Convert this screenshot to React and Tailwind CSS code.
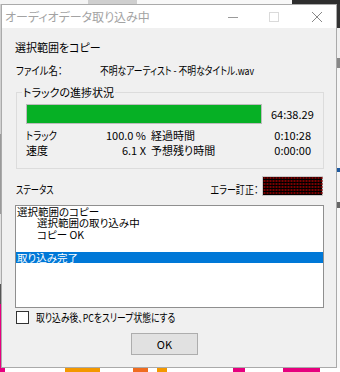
import React from "react";

function Led() {
  const dots = [];
  for (let r = 0; r < 6; r++) {
    for (let c = 0; c < 20; c++) {
      dots.push(<rect key={r + "-" + c} x={1.5 + c * 3} y={1 + r * 3} width="2" height="2" fill="#7a0000" />);
    }
  }
  return (
    <svg width="61" height="20" viewBox="0 0 61 20" className="block">
      <rect x="0" y="0" width="61" height="20" fill="#c8c8c8" />
      <rect x="1" y="1" width="59" height="18" fill="#000" />
      {dots}
    </svg>
  );
}

function Window() {
  return (
    <div className="w-[336px] h-[364px] border border-[#aaaaaa] flex flex-col shrink-0">
      <div className="h-[23px] bg-white flex items-center shrink-0">
        <span className="pl-[3px] text-[12px] leading-[14px] text-[#a3a3a3]">オーディオデータ取り込み中</span>
        <svg width="10" height="10" viewBox="0 0 10 10" className="ml-auto block">
          <line x1="0" y1="5.5" x2="10" y2="5.5" stroke="#9a9a9a" strokeWidth="1" />
        </svg>
        <svg width="10" height="10" viewBox="0 0 10 10" className="ml-[31px] block">
          <rect x="0.5" y="0.5" width="9" height="9" fill="none" stroke="#dadada" strokeWidth="1" />
        </svg>
        <svg width="10" height="10" viewBox="0 0 10 10" className="ml-[33px] mr-[14px] block">
          <path d="M0 0 L10 10 M10 0 L0 10" stroke="#888" strokeWidth="1" />
        </svg>
      </div>
      <div className="flex-1 bg-[#f0f0f0] flex flex-col pl-[14px]">
        <div className="mt-[12px] h-[14px] leading-[14px] -ml-px">選択範囲をコピー</div>
        <div className="mt-[9px] h-[14px] leading-[14px] flex">
          <span className="w-[84px]">
            <span className="inline-block origin-left scale-x-[0.85]">ファイル名：</span>
          </span>
          <span className="inline-block origin-left scale-x-[0.8] whitespace-nowrap">不明なアーティスト - 不明なタイトル.wav</span>
        </div>
        <fieldset className="mt-[8px] w-[307px] border border-[#dcdcdc]">
          <legend className="ml-[5px] px-[1px] leading-[14px]">トラックの進捗状況</legend>
          <div className="px-[9px] pb-[10px]">
            <div className="mt-[5px] flex items-center">
              <div className="w-[236px] h-[20px] border border-[#bcbcbc] bg-[#06b025]" />
              <span className="ml-[9px] leading-[14px]">64:38.29</span>
            </div>
            <div className="mt-[4px] h-[15px] leading-[15px] flex">
              <div className="w-[120px] flex justify-between">
                <span className="inline-block origin-left scale-x-[0.85]">トラック</span>
                <span>100.0 %</span>
              </div>
              <div className="ml-[5px] w-[160px] flex justify-between">
                <span>経過時間</span>
                <span>0:10:28</span>
              </div>
            </div>
            <div className="h-[15px] leading-[15px] flex">
              <div className="w-[120px] flex justify-between">
                <span>速度</span>
                <span>6.1 X</span>
              </div>
              <div className="ml-[5px] w-[160px] flex justify-between">
                <span>予想残り時間</span>
                <span>0:00:00</span>
              </div>
            </div>
          </div>
        </fieldset>
        <div className="mt-[7px] h-[20px] w-[307px] flex items-end">
          <span className="inline-block origin-left scale-x-[0.75] leading-[14px]">ステータス</span>
          <span className="ml-auto mr-[4px] inline-block origin-right scale-x-[0.82] leading-[14px]">エラー訂正：</span>
          <div className="self-start">
            <Led />
          </div>
        </div>
        <div className="mt-[9px] -ml-px w-[309px] h-[103px] border border-[#8f8f8f] bg-white text-[10.5px] leading-[11.4px]">
          <div className="pl-[1px]">選択範囲のコピー</div>
          <div className="pl-[21px]">選択範囲の取り込み中</div>
          <div className="pl-[21px]">コピー OK</div>
          <div className="h-[11.4px]"></div>
          <div className="pl-[1px] bg-[#0078d7] text-white">取り込み完了</div>
        </div>
        <div className="mt-[3px] h-[13px] flex items-center">
          <div className="w-[13px] h-[13px] border border-[#333333] bg-white shrink-0" />
          <span className="ml-[7px] leading-[13px] inline-block origin-left scale-x-[0.8] whitespace-nowrap">取り込み後、PCをスリープ状態にする</span>
        </div>
        <div className="mt-[9px] ml-[115px] w-[67px] h-[22px] border border-[#adadad] bg-[#e1e1e1] flex items-center justify-center leading-[14px]">
          OK
        </div>
      </div>
    </div>
  );
}

export default function App() {
  return (
    <div className="w-[340px] h-[372px] overflow-hidden flex flex-col bg-white font-['Noto_Sans_CJK_JP',sans-serif] [font-feature-settings:'palt'] text-[11px] text-black">
      <div className="h-[4px] flex shrink-0">
        <div className="w-[88px] bg-[#f4f4f4]" />
        <div className="w-[49px] bg-[#cfcfcf]" />
        <div className="w-[155px] bg-[#f8f8f8]" />
        <div className="flex-1 bg-[#2e2e2e]" />
      </div>
      <div className="flex h-[364px] shrink-0">
        <div className="w-[1px] flex flex-col">
          <div className="h-[130px] bg-[#d0d0d0]" />
          <div className="h-[80px] bg-[#9a9a9a]" />
          <div className="h-[70px] bg-[#e0e0e0]" />
          <div className="h-[20px] bg-[#555555]" />
          <div className="flex-1 bg-[#e6007e]" />
        </div>
        <Window />
        <div className="flex-1 flex flex-col">
          <div className="h-[24px] bg-[#333333]" />
          <div className="h-[30px] bg-[#f0f0f0]" />
          <div className="h-[10px] bg-[#888888]" />
          <div className="h-[100px] bg-[#f5f5f5]" />
          <div className="h-[4px] bg-[#1e5aa0]" />
          <div className="h-[30px] bg-[#f5f5f5]" />
          <div className="h-[6px] bg-[#666666]" />
          <div className="flex-1 bg-[#f8f8f8]" />
        </div>
      </div>
      <div className="flex-1 flex">
        <div className="w-[5px] bg-[#e6007e]" />
        <div className="w-[60px]" />
        <div className="w-[35px] bg-[#f39800]" />
        <div className="w-[33px]" />
        <div className="w-[15px] bg-[#ef6c20]" />
        <div className="w-[9px]" />
        <div className="w-[10px] bg-[#f39800]" />
        <div className="w-[66px]" />
        <div className="w-[12px] bg-[#e6007e]" />
        <div className="w-[38px]" />
        <div className="w-[37px] bg-[#e6007e]" />
        <div className="flex-1" />
      </div>
    </div>
  );
}
